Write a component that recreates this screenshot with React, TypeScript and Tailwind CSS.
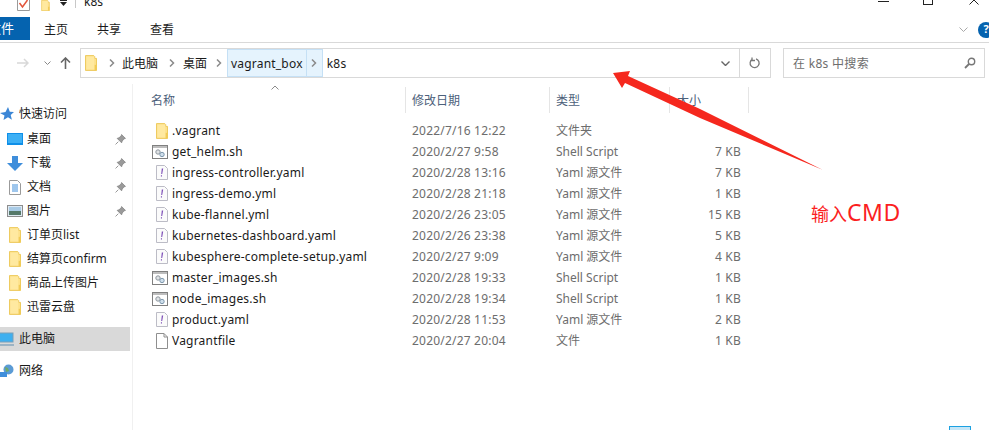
import { FC } from "react";

const font = { fontFamily: '"Noto Sans", "Noto Sans CJK SC", sans-serif' };

const Folder: FC<{ className?: string }> = ({ className }) => (
  <svg viewBox="0 0 13 17" className={className}>
    <path d="M.5.5h9l1 1v2h2v13H.5z" fill="#fde18b" stroke="#ecc552" />
    <path d="M1.500 1.500h8.500v14H1.500z" fill="#ffe9a0" />
    <path d="M10.500 10.500h2v6h-2z" fill="#f2cb55" />
  </svg>
);

const ScriptIcon = () => (
  <svg viewBox="0 0 16 14" className="h-[14px] w-[16px]">
    <rect x=".5" y=".5" width="15" height="13" fill="#fff" stroke="#808080" />
    <rect x="1" y="1" width="14" height="2" fill="#bdbdbd" />
    <circle cx="6" cy="7" r="2.200" fill="#dfe3e6" stroke="#8f979e" />
    <circle cx="10" cy="9.500" r="2.200" fill="#cfdfec" stroke="#7f98ad" />
  </svg>
);

const YamlIcon = () => (
  <svg viewBox="0 0 12 15" className="h-[15px] w-[12px]">
    <path d="M.5.5h8l3 3v11H.5z" fill="#fbfbfb" stroke="#bcbcc6" />
    <path d="M7.200 3.500l-1 5.500H5.200l.6-5.500zM4.900 10.200h1.100v1.300H4.900z" fill="#7d4fb8" />
  </svg>
);

const PlainIcon = () => (
  <svg viewBox="0 0 12 16" className="h-[16px] w-[12px]">
    <path d="M.5.5h7.500l3.500 3.500v11.500H.5z" fill="#fff" stroke="#8f8f8f" />
    <path d="M8 .5v3.500h3.500" fill="none" stroke="#8f8f8f" />
  </svg>
);

const Chevron = () => (
  <svg viewBox="0 0 6 8" className="h-2 w-[6px]">
    <path d="M1 .5L4.500 4 1 7.500" fill="none" stroke="#8a8a8a" strokeWidth="1.500" />
  </svg>
);

const Pin = () => (
  <svg viewBox="0 0 10 10" className="h-[11px] w-[11px]">
    <path d="M6 .5l3.500 3.500-1.500.5-1.500 2-.5 1.500-4-4 1.500-.5 2-1.500zM3 7L.5 9.500" fill="#9a9a9a" stroke="#8a8a8a" strokeWidth=".8" />
  </svg>
);

const files = [
  { name: ".vagrant", date: "2022/7/16 12:22", type: "文件夹", size: "", icon: "folder" },
  { name: "get_helm.sh", date: "2020/2/27 9:58", type: "Shell Script", size: "7 KB", icon: "script" },
  { name: "ingress-controller.yaml", date: "2020/2/28 13:16", type: "Yaml 源文件", size: "7 KB", icon: "yaml" },
  { name: "ingress-demo.yml", date: "2020/2/28 21:18", type: "Yaml 源文件", size: "1 KB", icon: "yaml" },
  { name: "kube-flannel.yml", date: "2020/2/26 23:05", type: "Yaml 源文件", size: "15 KB", icon: "yaml" },
  { name: "kubernetes-dashboard.yaml", date: "2020/2/26 23:38", type: "Yaml 源文件", size: "5 KB", icon: "yaml" },
  { name: "kubesphere-complete-setup.yaml", date: "2020/2/27 9:09", type: "Yaml 源文件", size: "4 KB", icon: "yaml" },
  { name: "master_images.sh", date: "2020/2/28 19:33", type: "Shell Script", size: "1 KB", icon: "script" },
  { name: "node_images.sh", date: "2020/2/28 19:34", type: "Shell Script", size: "1 KB", icon: "script" },
  { name: "product.yaml", date: "2020/2/28 11:53", type: "Yaml 源文件", size: "2 KB", icon: "yaml" },
  { name: "Vagrantfile", date: "2020/2/27 20:04", type: "文件", size: "1 KB", icon: "plain" },
];

const FileIcon = ({ icon }: { icon: string }) => {
  if (icon === "folder") return <Folder className="h-[16px] w-[12px]" />;
  if (icon === "script") return <ScriptIcon />;
  if (icon === "yaml") return <YamlIcon />;
  return <PlainIcon />;
};

const quick = [
  {
    label: "桌面",
    icon: (
      <svg viewBox="0 0 16 12" className="h-[12px] w-[16px]">
        <rect width="16" height="12" fill="#0f8fe8" />
        <rect x="1" y="1" width="14" height="9" fill="#3db0f5" />
      </svg>
    ),
  },
  {
    label: "下载",
    icon: (
      <svg viewBox="0 0 16 15" className="h-[15px] w-[16px]">
        <path d="M5 0h6v7h5l-8 8-8-8h5z" fill="#3f8edb" />
      </svg>
    ),
  },
  {
    label: "文档",
    icon: (
      <svg viewBox="0 0 12 15" className="h-[15px] w-[12px]">
        <path d="M.5.5h8l3 3v11H.5z" fill="#fff" stroke="#9a9a9a" />
        <path d="M3 5h6M3 7h6M3 9h6M3 11h6" stroke="#3f8edb" />
      </svg>
    ),
  },
  {
    label: "图片",
    icon: (
      <svg viewBox="0 0 16 12" className="h-[12px] w-[16px]">
        <rect x=".5" y=".5" width="15" height="11" fill="#dfeaf3" stroke="#8d8d8d" />
        <rect x="2" y="2" width="12" height="4" fill="#a9cbe6" />
        <rect x="2" y="6" width="12" height="4" fill="#55796a" />
      </svg>
    ),
  },
];

const pinnedFolders = ["订单页list", "结算页confirm", "商品上传图片", "迅雷云盘"];

export default function App() {
  return (
    <div style={font} className="relative flex h-[430px] w-[989px] flex-col overflow-hidden bg-white text-[12px] text-[#1a1a1a]">
      {/* title bar, cut off at the top */}
      <div className="flex h-[17px] items-start overflow-hidden pl-[17px]">
        <svg viewBox="0 0 13 11" className="h-[11px] w-[13px]">
          <path d="M.5 -2h12v12.500H.5z" fill="#fff" stroke="#9a9a9a" />
          <path d="M2.500 3l3 4 5-7" fill="none" stroke="#e2543a" strokeWidth="1.500" />
        </svg>
        <Folder className="ml-[9px] h-[11px] w-[13px]" />
        <svg viewBox="0 0 7 7" className="ml-[8px] h-[7px] w-[7px]">
          <path d="M0 0h7v1H0zM0 2h7L3.500 6z" fill="#222" />
        </svg>
        <div className="ml-[8px] h-[8px] w-px bg-[#c8c8c8]" />
        <span className="-mt-[7px] ml-[8px] text-[12px] leading-[18px]">k8s</span>
        <div className="ml-auto mr-[10px] flex items-start">
          <div className="mt-px h-px w-[11px] bg-[#222]" />
          <div className="ml-[34px] h-[5px] w-[10px] border-x border-b border-[#222]" />
          <svg viewBox="0 0 10 5" className="ml-[36px] h-[5px] w-[10px]">
            <path d="M.5 -4.500l9 9M9.500 -4.500l-9 9" stroke="#222" />
          </svg>
        </div>
      </div>

      {/* ribbon tabs */}
      <div className="flex h-[26px] border-b border-[#d9d9d9]">
        <div className="flex h-[23px] w-[30px] items-center bg-[#0563af] text-white">
          <span className="-ml-[12px] whitespace-nowrap text-[13px]">文件</span>
        </div>
        <span className="ml-[14px] text-[12px] leading-[25px]">主页</span>
        <span className="ml-[29px] text-[12px] leading-[25px]">共享</span>
        <span className="ml-[29px] text-[12px] leading-[25px]">查看</span>
        <div className="ml-auto flex h-[25px] items-center">
          <svg viewBox="0 0 9 5" className="h-[5px] w-[9px]">
            <path d="M.5.500l4 4 4-4" fill="none" stroke="#a8a8a8" />
          </svg>
          <div className="-mr-[5px] ml-[10px] flex h-[16px] w-[16px] items-center justify-center rounded-full bg-[#0563af] text-[11px] font-bold text-white">?</div>
        </div>
      </div>

      {/* address row */}
      <div className="flex h-[41px] items-center pb-px">
        <div className="flex w-[80px] items-center pl-[17px]">
          <svg viewBox="0 0 12 10" className="h-[10px] w-[12px]">
            <path d="M0 5h11M7 1l4 4-4 4" fill="none" stroke="#d8d8d8" strokeWidth="1.500" />
          </svg>
          <svg viewBox="0 0 7 4" className="ml-[15px] h-[4px] w-[7px]">
            <path d="M.5.500l3 3 3-3" fill="none" stroke="#888" />
          </svg>
          <svg viewBox="0 0 11 12" className="ml-[9px] h-[12px] w-[11px]">
            <path d="M5.500 12V1M1 5.500l4.500-4.500 4.500 4.500" fill="none" stroke="#666" strokeWidth="1.600" />
          </svg>
        </div>
        <div className="flex h-[30px] w-[691px] items-center border border-[#d9d9d9]">
          <Folder className="ml-[4px] h-[16px] w-[12px]" />
          <div className="ml-[12px]"><Chevron /></div>
          <span className="ml-[7px] pt-[2px]">此电脑</span>
          <div className="ml-[11px]"><Chevron /></div>
          <span className="ml-[8px] pt-[2px]">桌面</span>
          <div className="ml-[9px]"><Chevron /></div>
          <div className="ml-[5px] flex h-[28px] items-center border border-[#c5e0f5] bg-[#e5f3fd]">
            <span className="px-[3px] pt-[2px] tracking-[0.2px]">vagrant_box</span>
            <div className="flex h-full w-[16px] items-center justify-center border-l border-[#c5e0f5]"><Chevron /></div>
          </div>
          <span className="ml-[4px] pt-[2px] tracking-[0.2px]">k8s</span>
          <svg viewBox="0 0 9 5" className="ml-auto h-[5px] w-[9px]">
            <path d="M.5.500l4 4 4-4" fill="none" stroke="#666" strokeWidth="1.400" />
          </svg>
          <div className="ml-[9px] flex h-full w-[31px] items-center justify-center border-l border-[#d9d9d9]">
            <svg viewBox="0 0 12 12" className="h-[12px] w-[12px]">
              <path d="M7 1.800a4.500 4.500 0 1 1-3.500.3M3 .5v3h3" fill="none" stroke="#777" strokeWidth="1.300" />
            </svg>
          </div>
        </div>
        <div className="ml-[12px] flex h-[30px] w-[202px] items-center justify-between border border-[#d9d9d9] pl-[9px] pr-[8px] text-[#6d6d6d]">
          <span className="pt-[2px] tracking-[0.3px]">在 k8s 中搜索</span>
          <svg viewBox="0 0 12 12" className="h-[12px] w-[12px]">
            <circle cx="7.500" cy="4.500" r="3.200" fill="none" stroke="#777" strokeWidth="1.400" />
            <path d="M5 7l-4 4" stroke="#777" strokeWidth="1.800" />
          </svg>
        </div>
      </div>

      <div className="flex min-h-0 flex-1">
        {/* navigation pane */}
        <nav className="w-[133px] shrink-0 border-r border-[#f0f0f0] pt-[18px]">
          <div className="mb-px flex h-[24px] items-center">
            <svg viewBox="0 0 14 14" className="h-[14px] w-[14px]">
              <path d="M8 0l1.800 4.800 4.200.2-3.300 3 1.200 4.800L8 10.200 3.500 13l1-4.500L0 6l5.500-1z" fill="#3b86d6" />
            </svg>
            <span className="ml-[5px]">快速访问</span>
          </div>
          {quick.map((item) => (
            <div key={item.label} className="flex h-[24px] items-center">
              <div className="flex w-[27px] justify-center pl-[2px]">{item.icon}</div>
              <span>{item.label}</span>
              <div className="ml-auto mr-[6px]"><Pin /></div>
            </div>
          ))}
          {pinnedFolders.map((label) => (
            <div key={label} className="flex h-[24px] items-center">
              <div className="flex w-[27px] justify-center pl-[2px]"><Folder className="h-[16px] w-[12px]" /></div>
              <span>{label}</span>
            </div>
          ))}
          <div className="mt-[8px] flex h-[24px] w-[130px] items-center bg-[#d9d9d9]">
            <svg viewBox="0 0 14 14" className="h-[14px] w-[14px]">
              <rect x="-2" y="1" width="15" height="9" fill="#3fb0ef" stroke="#7b9fb8" />
              <rect x="-2" y="12" width="16" height="2" fill="#9cb3c4" />
            </svg>
            <span className="ml-[5px]">此电脑</span>
          </div>
          <div className="mt-[8px] flex h-[24px] items-center">
            <svg viewBox="0 0 14 15" className="h-[15px] w-[14px]">
              <circle cx="8.500" cy="5.500" r="5" fill="#5b9bd5" />
              <path d="M5 3l3 1 1 3-3 1z" fill="#6fa968" />
              <rect x="-2" y="8" width="9" height="5" fill="#3f8edb" />
            </svg>
            <span className="ml-[5px]">网络</span>
          </div>
        </nav>

        {/* file list */}
        <main className="relative min-w-0 flex-1">
          <div className="flex h-[30px] pt-[3px] text-[#4c607a]">
            <div className="relative w-[272px] pl-[18px] leading-[28px]">
              名称
              <svg viewBox="0 0 8 5" className="absolute left-[138px] -top-[2px] h-[5px] w-[8px]">
                <path d="M.5 4.500l3.500-3.500 3.500 3.500" fill="none" stroke="#8a8a8a" />
              </svg>
            </div>
            <div className="h-[26px] w-[144px] border-l border-[#e5e5e5] pl-[6px] leading-[28px]">修改日期</div>
            <div className="h-[26px] w-[120px] border-l border-[#e5e5e5] pl-[6px] leading-[28px]">类型</div>
            <div className="h-[26px] w-[80px] border-x border-[#e5e5e5] pl-[7px] leading-[28px]">大小</div>
          </div>
          <div className="pt-[6px]">
            {files.map((file) => (
              <div key={file.name} className="flex h-[21px] items-center">
                <div className="flex w-[272px] items-center">
                  <div className="flex w-[39px] justify-end pr-[4px]"><FileIcon icon={file.icon} /></div>
                  <span className="whitespace-nowrap tracking-[0.2px]">{file.name}</span>
                </div>
                <span className="w-[144px] pl-[7px] tracking-[0.2px] text-[#6d6d6d]">{file.date}</span>
                <span className="w-[120px] pl-[7px] text-[#6d6d6d]">{file.type}</span>
                <span className="w-[72px] text-right tracking-[0.2px] text-[#6d6d6d]">{file.size}</span>
              </div>
            ))}
          </div>
        </main>
      </div>

      {/* hand-drawn annotation over the window */}
      <svg viewBox="0 0 989 430" className="pointer-events-none absolute inset-0 h-[430px] w-[989px]">
        <polygon points="613,73 630,71 628,76 700,109 823,170 700,118 625,83 622,88" fill="#f5281e" />
      </svg>
      <span className="absolute left-[811px] top-[199px] flex items-baseline text-[18px] leading-[26px] text-[#fb1f1f]">
        输入<span className="text-[23px] tracking-[0.5px]">CMD</span>
      </span>

      {/* details view toggle at the bottom edge */}
      <div className="absolute left-[949px] top-[426px] h-[6px] w-[22px] border border-[#1ba1e2] bg-[#c5e6f7]" />
    </div>
  );
}
